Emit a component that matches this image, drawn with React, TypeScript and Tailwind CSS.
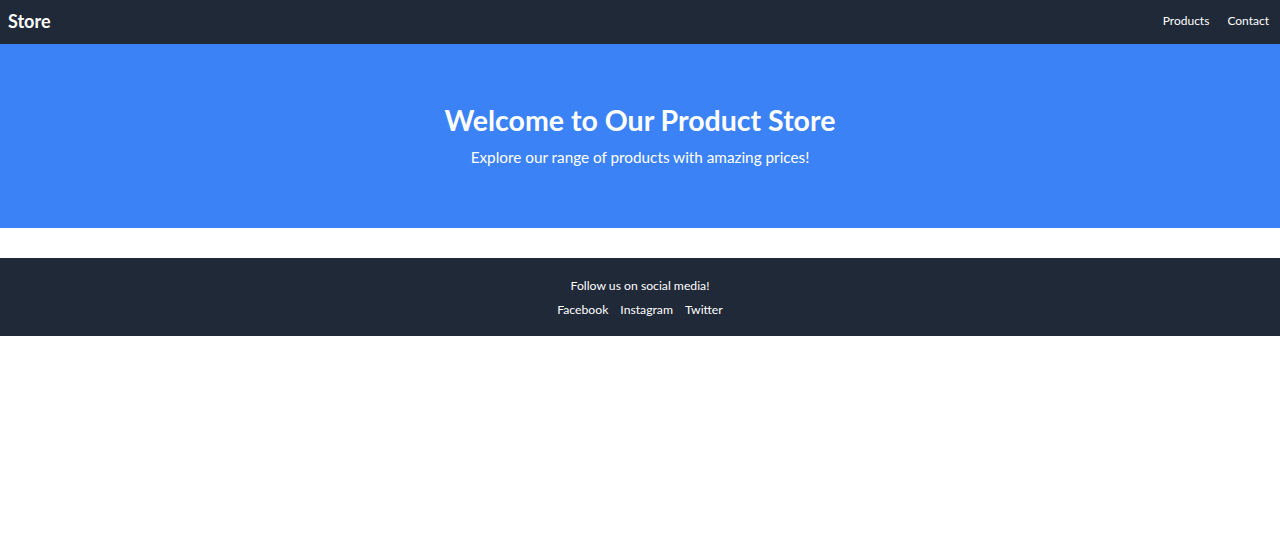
export default function App() {
  return (
    <div className="min-h-[558px] bg-white font-['Segoe_UI','Lato','Open_Sans',sans-serif] text-white">
      <nav className="flex h-11 items-center justify-between bg-[#1f2937] px-2 pb-0.5">
        <a href="#" className="text-lg font-bold">
          Store
        </a>
        <div className="flex gap-[18px] pr-[3px] text-[12px]">
          <a href="#">Products</a>
          <a href="#">Contact</a>
        </div>
      </nav>

      <header className="flex h-[184px] flex-col items-center justify-center bg-[#3b82f6] pb-1 text-center">
        <h1 className="text-[28.5px] font-bold">Welcome to Our Product Store</h1>
        <p className="mt-1 text-[15.3px]">
          Explore our range of products with amazing prices!
        </p>
      </header>

      <main className="h-[30px]" />

      <footer className="flex h-[78px] flex-col items-center justify-center gap-1.5 bg-[#1f2937] pt-0.5 text-[12.2px]">
        <p>Follow us on social media!</p>
        <div className="flex gap-3">
          <a href="#">Facebook</a>
          <a href="#">Instagram</a>
          <a href="#">Twitter</a>
        </div>
      </footer>
    </div>
  );
}
